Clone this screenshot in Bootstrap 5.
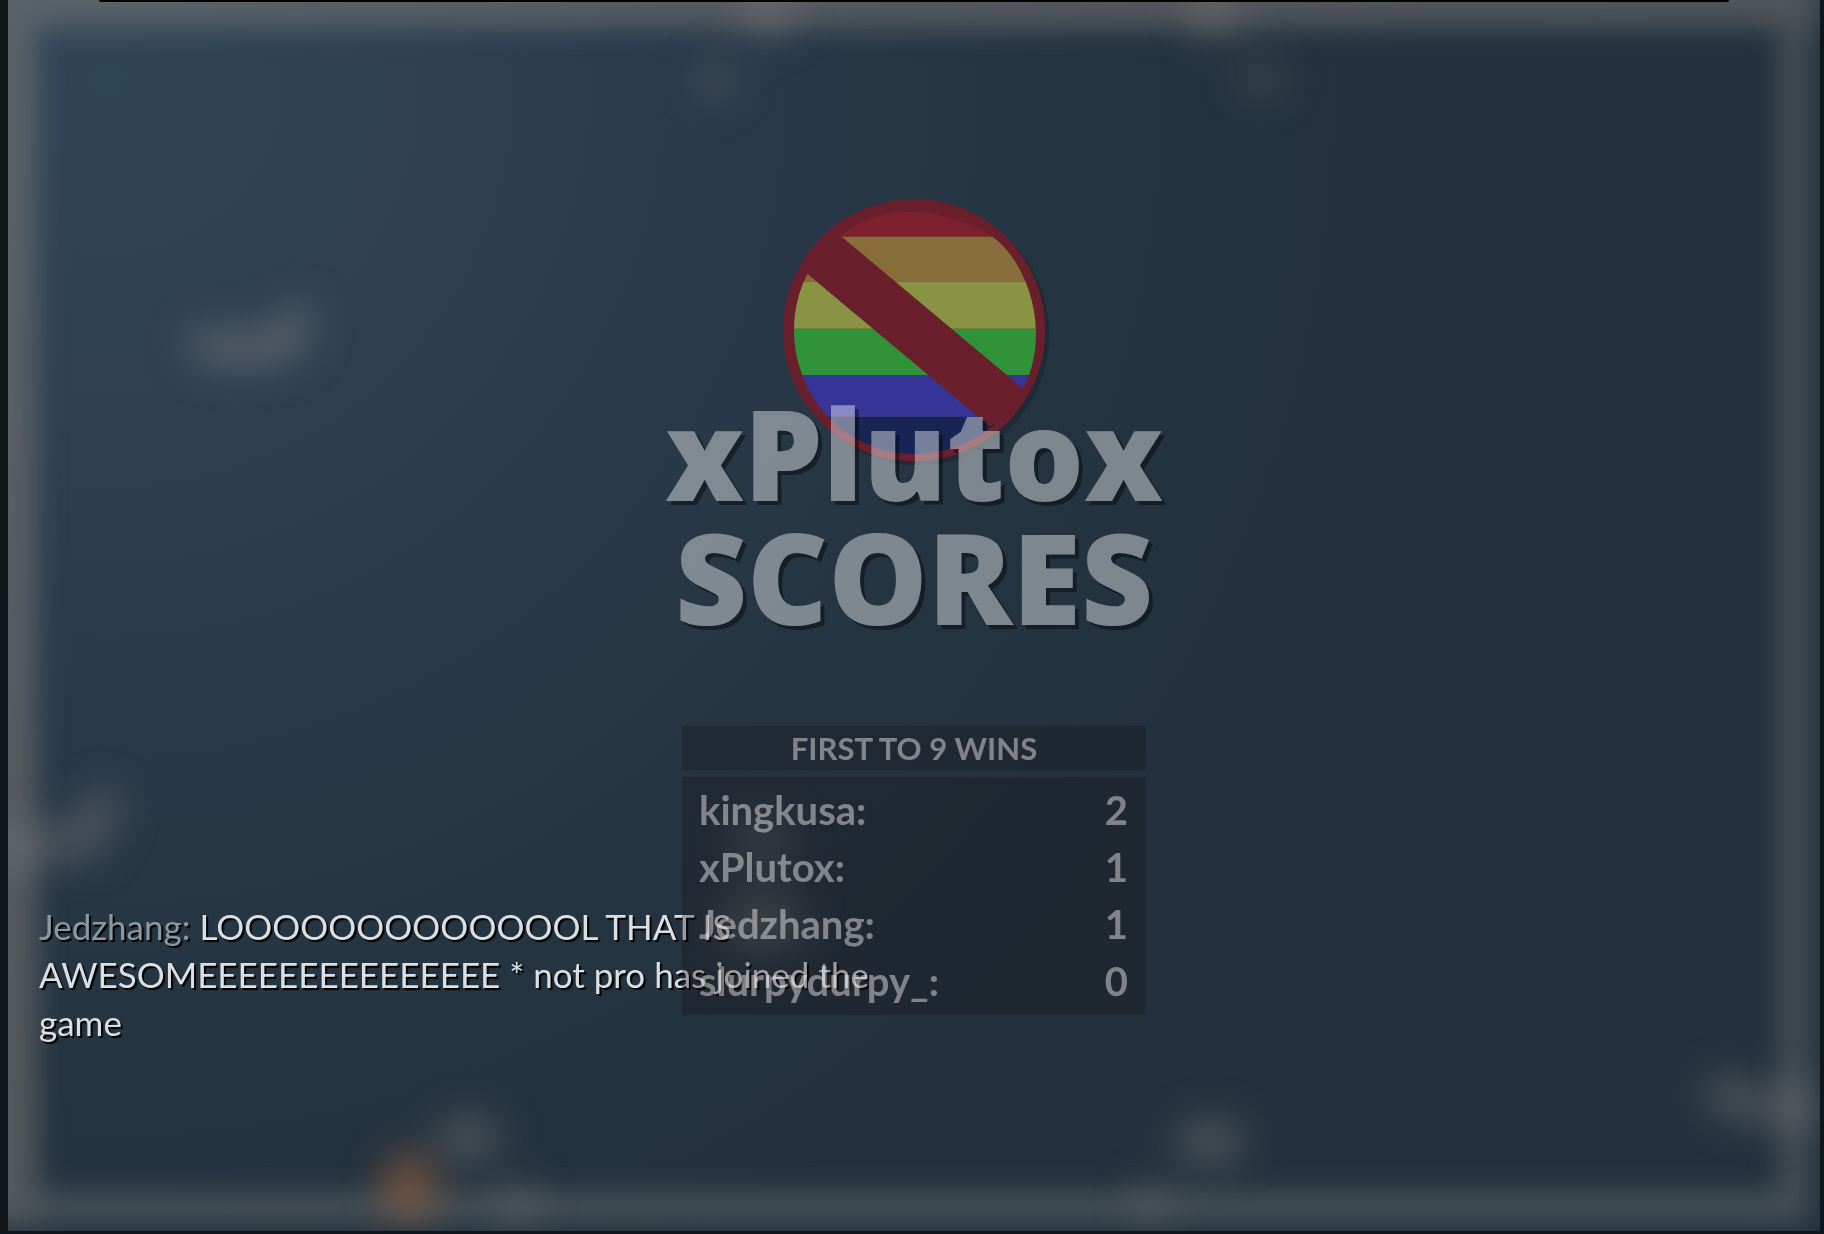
<!DOCTYPE html>
<html lang="en">
<head>
<meta charset="utf-8">
<meta name="viewport" content="width=device-width, initial-scale=1">
<title>Round scores</title>
<link href="https://cdn.jsdelivr.net/npm/bootstrap@5.3.0/dist/css/bootstrap.min.css" rel="stylesheet">
<style>
body { background: #10171b; font-family: Lato, "Open Sans", sans-serif; }
.arena {
  border: solid #10171b; border-width: 0 4px 3px 8px;
  background: radial-gradient(circle at 100px 80px, #2f4657 0, #2d3f51 340px, #293949 640px, #253441 960px, #22313d 1300px);
}
.scenery { z-index: 0; }
.notch { z-index: 1; left: 5%; right: 5%; height: 2px; background: #000; border-radius: 0 0 4px 4px; }
.chat { z-index: 1; left: 31px; bottom: 185px; width: 860px; font-size: 35px; line-height: 48px; color: #dcdfe2; text-shadow: 2px 2px 1px #000; }
.chat-name { color: #8b989f; }
.hud { z-index: 2; padding-top: 199px; }
.emblem { width: 267px; height: 267px; margin-left: 4px; }
.headline { margin-top: -75px; font-family: "Open Sans", Lato, sans-serif; font-weight: 800; font-size: 125px; line-height: 124px; color: #fff; text-shadow: 4px 4px 0 #000; opacity: .41; }
.board { width: 464px; margin-top: 87px; }
.panel { background: rgba(26, 18, 26, .32); }
.goal { height: 44px; font-size: 31px; line-height: 44px; font-weight: 700; }
.tally { margin-top: 7px; padding: 5px 18px 5px 17px; }
.dim { color: rgba(255, 255, 255, .43); }
.tally table { font-size: 40px; line-height: 57px; font-weight: 700; }
.tally th { font-weight: 700; }
.tally td, .tally th { padding: 0; }
</style>
<script src="https://cdn.jsdelivr.net/npm/bootstrap@5.3.0/dist/js/bootstrap.bundle.min.js"></script>
</head>
<body>
<main class="arena position-relative min-vh-100 overflow-hidden">
  <!-- out-of-focus walls and players behind the overlay -->
  <svg class="scenery position-absolute top-0 start-0 w-100 h-100" viewBox="8 0 1812 1231" preserveAspectRatio="none" aria-hidden="true">
    <defs>
      <filter id="soft" filterUnits="userSpaceOnUse" x="-100" y="-100" width="2024" height="1434" color-interpolation-filters="sRGB"><feGaussianBlur stdDeviation="14"/></filter>
      <filter id="softer" filterUnits="userSpaceOnUse" x="-100" y="-100" width="2024" height="1434" color-interpolation-filters="sRGB"><feGaussianBlur stdDeviation="19"/></filter>
      <linearGradient id="fade" x1="0" x2="1" y1="0" y2="0"><stop offset="0" stop-color="#84807c" stop-opacity=".5"/><stop offset="1" stop-color="#84807c" stop-opacity=".46"/></linearGradient>
    </defs>
    <g filter="url(#soft)">
      <rect x="-60" y="-60" width="1880" height="88" fill="url(#fade)"/>
      <rect x="-60" y="28" width="97" height="1198" fill="#84807c" opacity=".5"/>
      <rect x="1779" y="28" width="31" height="1195" fill="#848486" opacity=".36"/>
      <rect x="37" y="1192" width="1742" height="31" fill="#848684" opacity=".38"/>
    </g>
    <g filter="url(#softer)" fill="#84807e" stroke="#84807e" stroke-linecap="round" stroke-linejoin="round" stroke-width="0">
      <path d="M205 346 Q245 354 285 344 L297 322" fill="none" stroke-width="40" opacity=".46"/>
      <path d="M10 848 L85 840 L102 808" fill="none" stroke-width="42" opacity=".38"/>
      <path d="M1722 1094 L1760 1106 L1800 1106" fill="none" stroke-width="42" opacity=".4"/>
      <circle cx="768" cy="12" r="28" opacity=".36"/>
      <circle cx="1212" cy="12" r="28" opacity=".34"/>
      <circle cx="716" cy="80" r="24" opacity=".22"/>
      <circle cx="1262" cy="78" r="24" opacity=".22"/>
      <ellipse cx="468" cy="1138" rx="34" ry="26" opacity=".38"/>
      <circle cx="518" cy="1202" r="24" opacity=".24"/>
      <ellipse cx="1210" cy="1142" rx="38" ry="26" opacity=".38"/>
      <circle cx="1150" cy="1200" r="22" opacity=".24"/>
      <circle cx="762" cy="842" r="34" opacity=".32"/>
      <ellipse cx="762" cy="922" rx="46" ry="32" opacity=".42"/>
      <ellipse cx="409" cy="1186" rx="27" ry="34" fill="#a0623e" opacity=".62"/>
    </g>
  </svg>
  <div class="notch position-absolute top-0"></div>

  <p class="chat position-absolute m-0"><span class="chat-name">Jedzhang:</span> LOOOOOOOOOOOOOL THAT IS AWESOMEEEEEEEEEEEEEEE * not pro has joined the game</p>

  <section class="hud position-relative d-flex flex-column align-items-center">
    <svg class="emblem" viewBox="372 58 800 800" role="img" aria-label="Round winner emblem">
      <defs><clipPath id="disc"><path d="M405 450 C405 250 560 96 750 96 C830 96 930 125 1000 171 C1080 230 1130 350 1130 465 C1130 670 960 822 765 822 C570 822 405 660 405 450Z"/></clipPath></defs>
      <circle cx="777" cy="463" r="393" fill="#1d2730" opacity=".7"/>
      <circle cx="765" cy="451" r="393" fill="#6a1f2d"/>
      <g clip-path="url(#disc)">
        <rect x="400" y="90" width="740" height="81" fill="#7e212e"/>
        <rect x="400" y="171" width="740" height="135" fill="#886e3b"/>
        <rect x="400" y="306" width="740" height="141" fill="#889343"/>
        <rect x="400" y="447" width="740" height="139" fill="#309337"/>
        <rect x="400" y="586" width="740" height="125" fill="#373598"/>
        <rect x="400" y="711" width="740" height="120" fill="#172553"/>
      </g>
      <path d="M548 171 L1092 627 L1070 690 L992 740 L449 286 L430 265 L525 155Z" fill="#6a1f2d"/>
    </svg>
    <h1 class="headline mb-0 text-center">xPlutox<br>SCORES</h1>
    <div class="board">
      <h2 class="panel goal dim text-center mb-0">FIRST TO 9 WINS</h2>
      <div class="panel tally">
        <table class="w-100 dim">
          <tbody>
            <tr><th scope="row">kingkusa:</th><td class="text-end">2</td></tr>
            <tr><th scope="row">xPlutox:</th><td class="text-end">1</td></tr>
            <tr><th scope="row">Jedzhang:</th><td class="text-end">1</td></tr>
            <tr><th scope="row">slurpydurpy_:</th><td class="text-end">0</td></tr>
          </tbody>
        </table>
      </div>
    </div>
  </section>
</main>
</body>
</html>
